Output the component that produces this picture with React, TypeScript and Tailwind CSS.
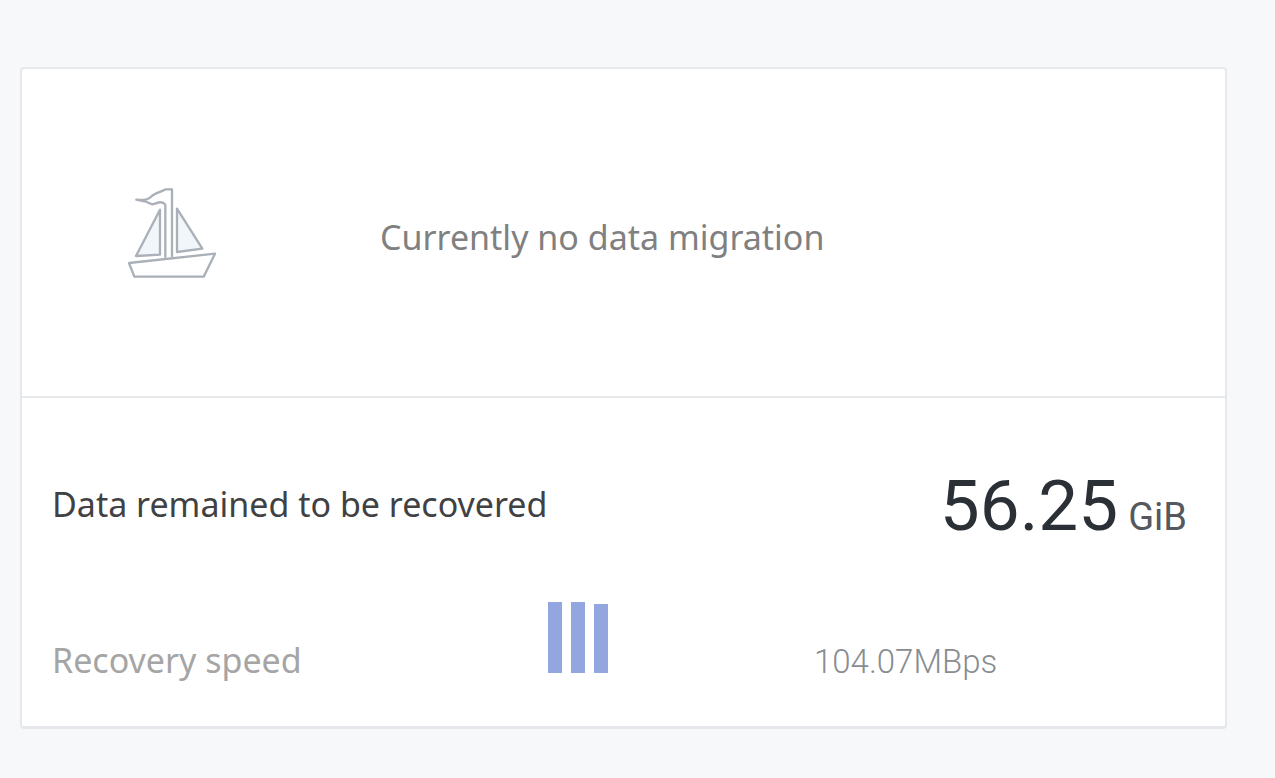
function BoatIcon() {
  return (
    <svg
      className="h-24 w-24"
      viewBox="27 27 288 288"
      fill="none"
      stroke="#a9b0b8"
      strokeWidth="7"
      strokeLinejoin="round"
      aria-hidden="true"
    >
      <path d="M135 101 L63 240 L135 236 Z" fill="#f1f6fa" />
      <path d="M186 98 L262 218 L186 228 Z" fill="#f1f6fa" />
      <path
        d="M151 245 V86 C142 74 130 78 117 84 C106 88 100 76 88 76 L64 71 C84 73 99 72 108 62 C120 49 145 46 151 40 H171 V243"
        fill="#fff"
      />
      <path d="M42 261 L300 233 L266 302 H58 Z" fill="#fff" />
    </svg>
  );
}

function SpeedBars() {
  return (
    <div className="flex h-[71px] items-end gap-[9px]">
      <div className="h-[71px] w-3.5 bg-[#94a6e0]" />
      <div className="h-[71px] w-3.5 bg-[#94a6e0]" />
      <div className="h-[69px] w-3.5 bg-[#94a6e0]" />
    </div>
  );
}

export default function App() {
  return (
    <main className="min-h-screen bg-[#f6f8fa] pt-[67px] pr-12 pb-12 pl-5 font-['Noto_Sans',sans-serif] text-[34px] leading-10">
      <div className="rounded border-2 border-b-[3px] border-[#e6e8eb] bg-white">
        <section className="grid h-[329px] grid-cols-[358px_1fr] items-center border-b-2 border-[#e9eaec]">
          <div className="pl-[102px]">
            <BoatIcon />
          </div>
          <p className="pt-2 text-[#808080]">Currently no data migration</p>
        </section>

        <section className="px-[30px] pt-[72px] pb-11">
          <div className="flex items-center justify-between">
            <h2 className="pb-1 text-[#3f4143]">Data remained to be recovered</h2>
            <p className="flex items-baseline gap-2.5 pr-2 font-['Roboto',sans-serif] text-[#2b3036]">
              <span className="text-[71px] leading-[72px]">56.25</span>
              <span className="text-[38px] text-[#55595e]">GiB</span>
            </p>
          </div>
          <div className="mt-[60px] grid grid-cols-[496px_266px_1fr] items-baseline">
            <h3 className="text-[#a5a5a5]">Recovery speed</h3>
            <SpeedBars />
            <p className="font-['Roboto',sans-serif] text-[33px] font-light text-[#888d92]">104.07MBps</p>
          </div>
        </section>
      </div>
    </main>
  );
}
